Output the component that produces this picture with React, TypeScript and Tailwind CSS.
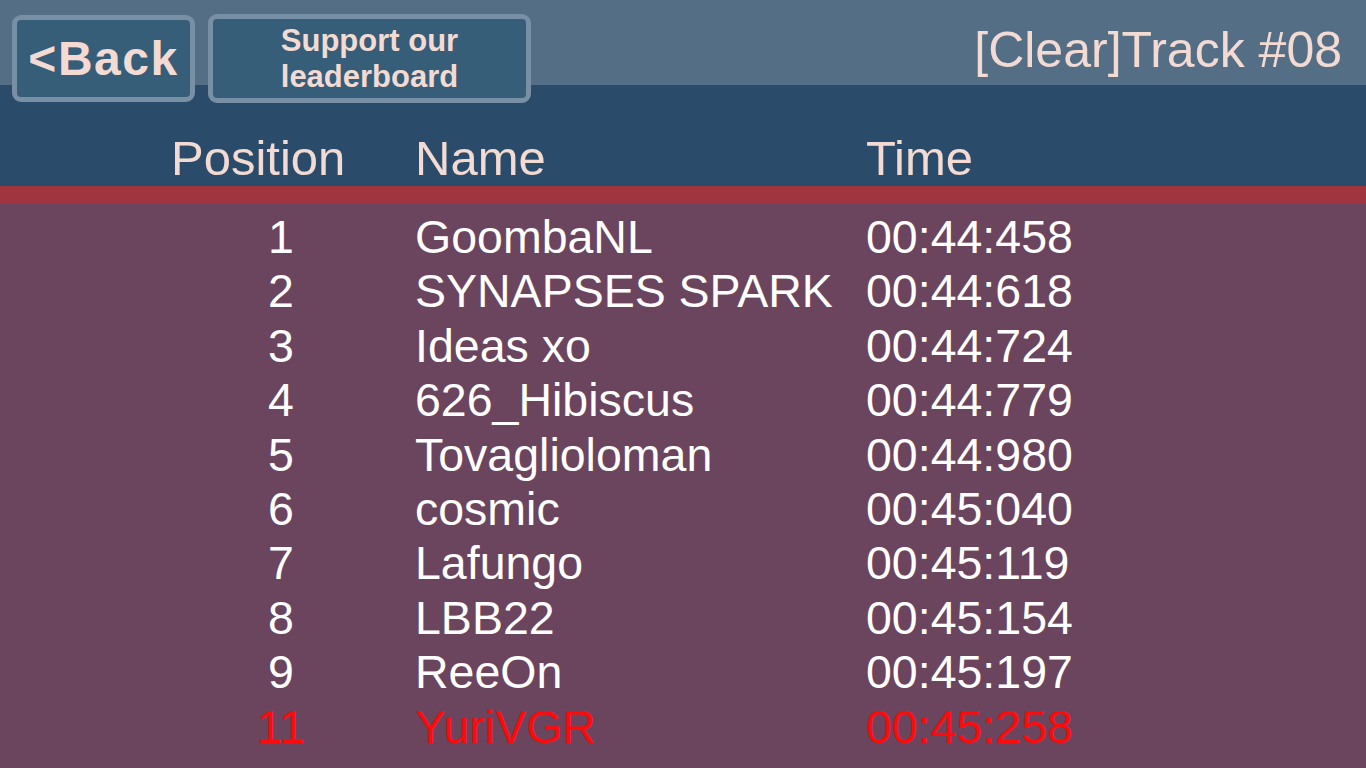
import React from "react";

const rows: { pos: string; name: string; time: string; me?: boolean }[] = [
  { pos: "1", name: "GoombaNL", time: "00:44:458" },
  { pos: "2", name: "SYNAPSES SPARK", time: "00:44:618" },
  { pos: "3", name: "Ideas xo", time: "00:44:724" },
  { pos: "4", name: "626_Hibiscus", time: "00:44:779" },
  { pos: "5", name: "Tovaglioloman", time: "00:44:980" },
  { pos: "6", name: "cosmic", time: "00:45:040" },
  { pos: "7", name: "Lafungo", time: "00:45:119" },
  { pos: "8", name: "LBB22", time: "00:45:154" },
  { pos: "9", name: "ReeOn", time: "00:45:197" },
  { pos: "11", name: "YuriVGR", time: "00:45:258", me: true },
];

export default function App() {
  return (
    <div
      className="w-[1366px] h-[768px] overflow-hidden flex flex-col bg-[#6b445e]"
      style={{ fontFamily: '"Liberation Sans", Arial, sans-serif' }}
    >
      {/* Top bar */}
      <div className="relative z-10 h-[85px] shrink-0 bg-[#546e86] flex items-start pl-[12px] pr-[24px] pt-[15px]">
        <div className="w-[183px] h-[87px] rounded-[9px] border-[5px] border-[#7890a6] bg-[#365e79] flex items-center justify-center">
          <span className="text-[48px] leading-none font-bold text-[#f3dbd3] tracking-[1.5px] mt-[1px]">
            &lt;Back
          </span>
        </div>
        <div className="ml-[13px] -mt-[1px] w-[323px] h-[89px] rounded-[9px] border-[5px] border-[#7890a6] bg-[#365e79] flex items-center justify-center">
          <span className="text-[31px] leading-[36px] font-bold text-[#f3dbd3] text-center mt-[1px]">
            Support our
            <br />
            leaderboard
          </span>
        </div>
        <div className="ml-auto mt-[10px] text-[50px] leading-[50px] text-[#f3dbd3]">
          [Clear]Track #08
        </div>
      </div>

      {/* Header */}
      <div className="h-[101px] shrink-0 bg-[#2a4b69] pl-[171px] pt-[49px]">
        <div className="grid grid-cols-[244px_451px_1fr] text-[49px] leading-[48px] text-[#f3dbd3]">
          <div>Position</div>
          <div>Name</div>
          <div>Time</div>
        </div>
      </div>

      {/* Red bar */}
      <div className="h-[17px] shrink-0 bg-[#a0343f]" />

      {/* Rows */}
      <div className="flex-1 pl-[171px] pt-[7px]">
        {rows.map((r) => (
          <div
            key={r.pos}
            className={`grid grid-cols-[244px_451px_1fr] h-[54.4px] text-[46.5px] leading-[54.4px] whitespace-nowrap ${
              r.me ? "text-[#ff0a0a]" : "text-white"
            }`}
          >
            <div className="pr-[24px] text-center">{r.pos}</div>
            <div>{r.name}</div>
            <div>{r.time}</div>
          </div>
        ))}
      </div>
    </div>
  );
}
